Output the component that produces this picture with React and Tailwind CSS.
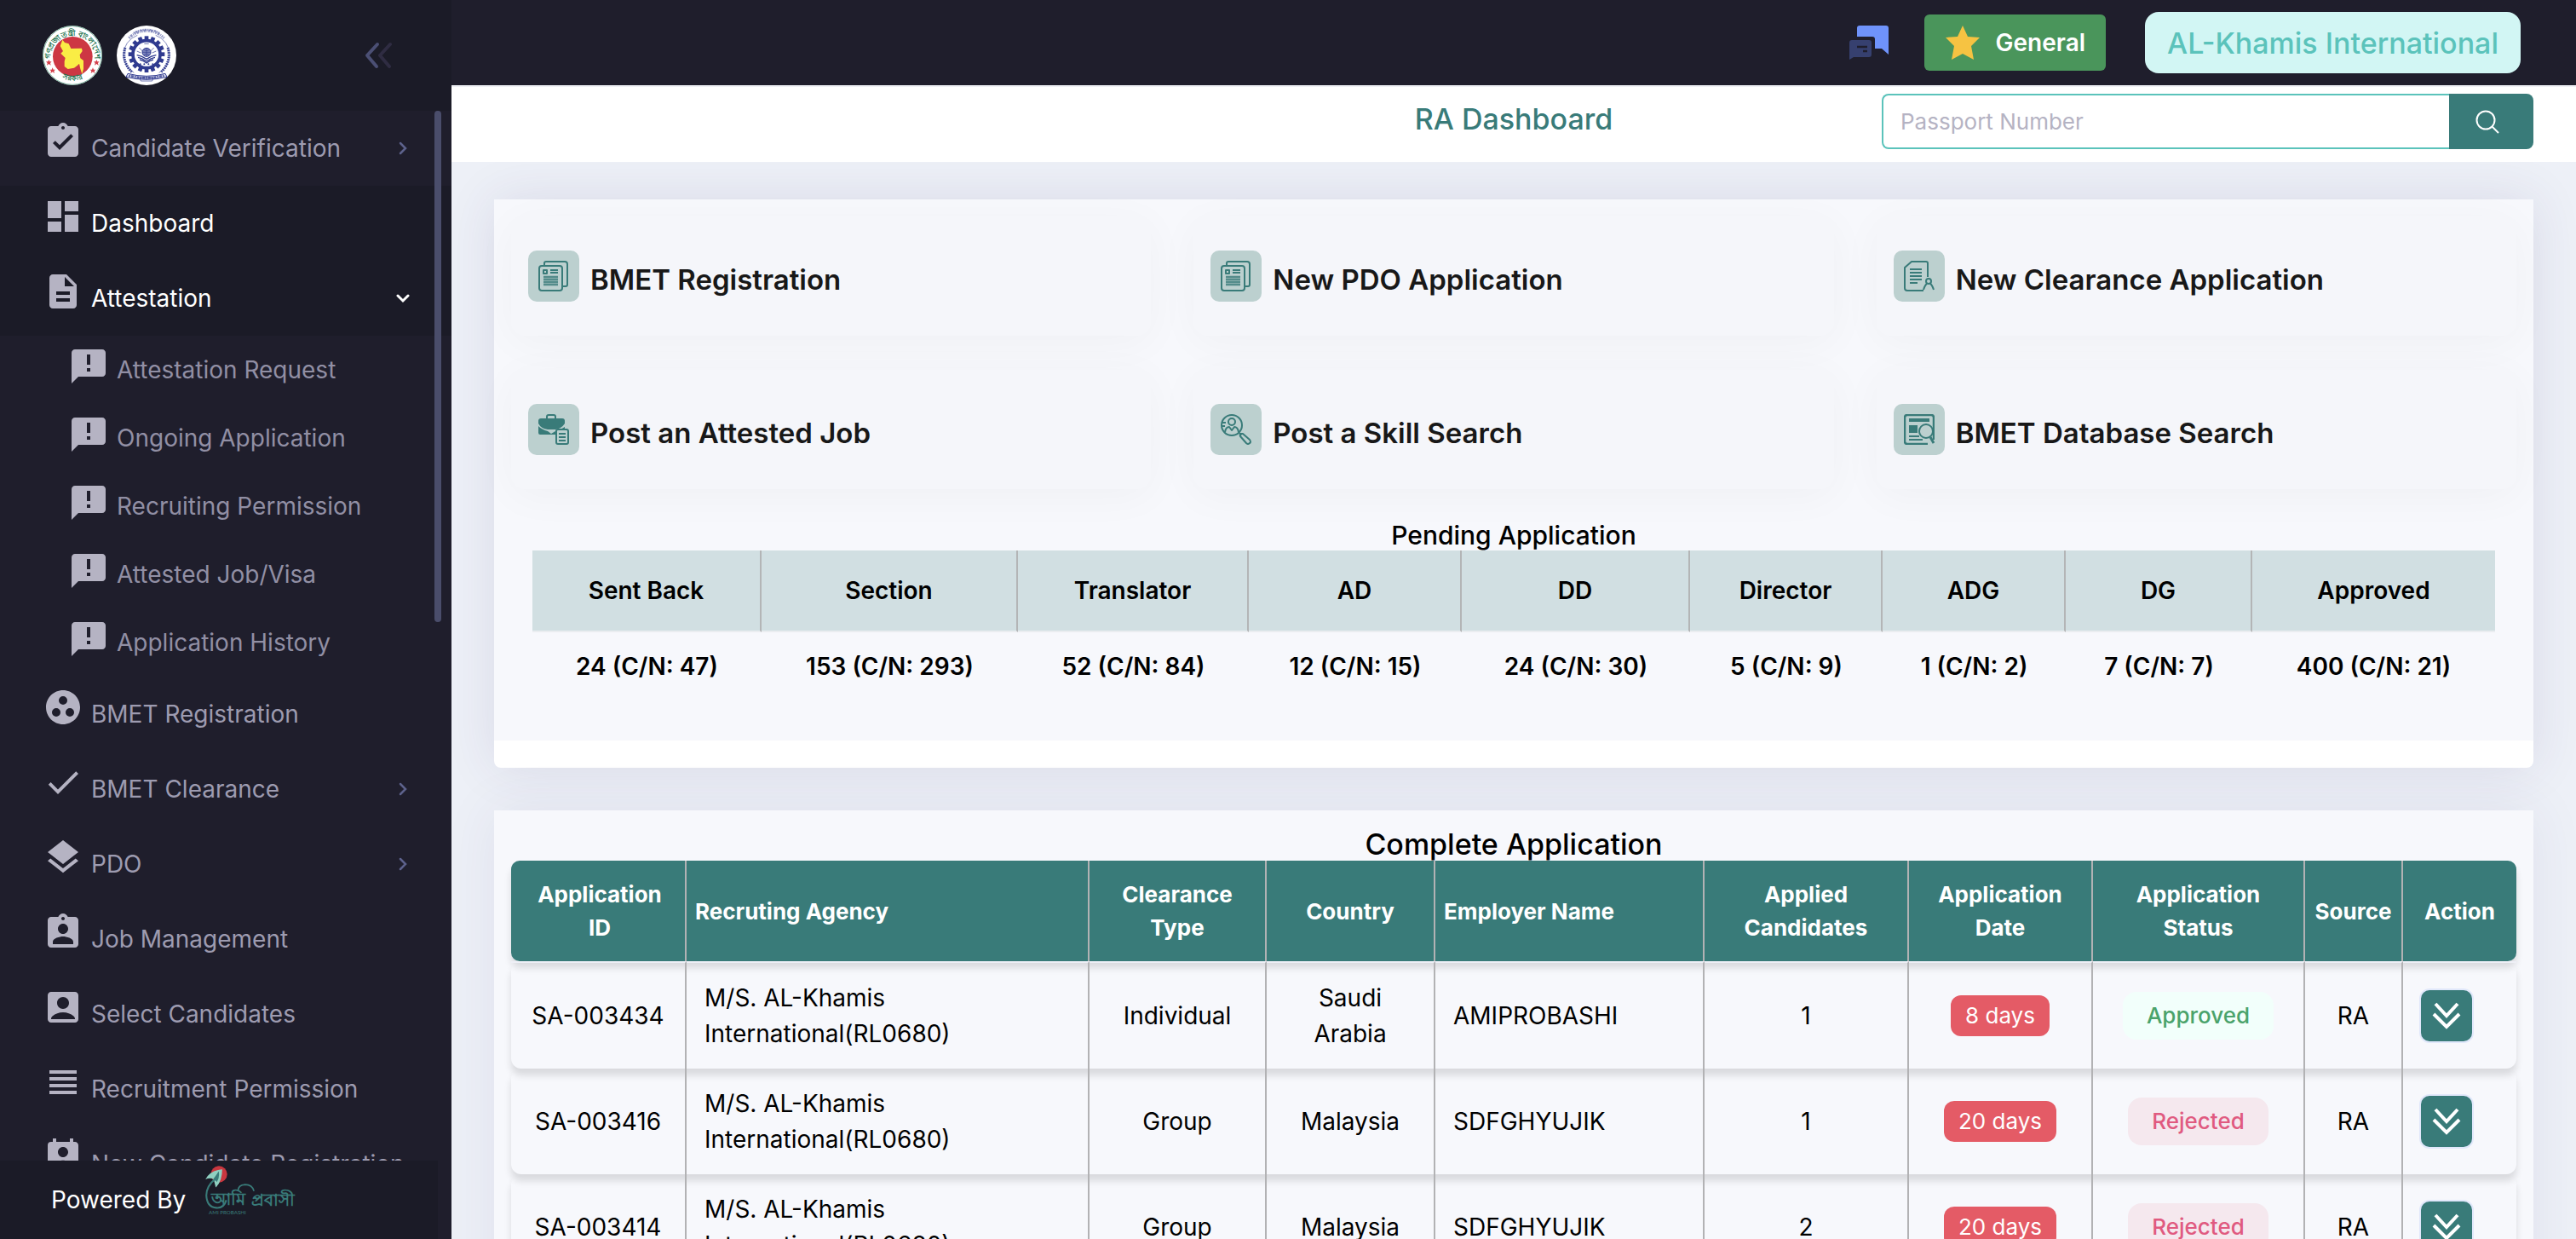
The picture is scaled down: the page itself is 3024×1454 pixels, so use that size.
import {
  MdAccountBox,
  MdAnnouncement,
  MdAssignmentInd,
  MdAssignmentTurnedIn,
  MdDashboard,
  MdDescription,
  MdDone,
  MdGroupWork,
  MdLayers,
  MdPermContactCalendar,
  MdViewHeadline,
} from "react-icons/md";

const TEAL = "#397b79";

const menu = [
  { label: "Candidate Verification", icon: MdAssignmentTurnedIn, arrow: "right" },
  { label: "Dashboard", icon: MdDashboard, active: true },
  {
    label: "Attestation",
    icon: MdDescription,
    active: true,
    arrow: "down",
    children: [
      "Attestation Request",
      "Ongoing Application",
      "Recruiting Permission",
      "Attested Job/Visa",
      "Application History",
    ],
  },
  { label: "BMET Registration", icon: MdGroupWork },
  { label: "BMET Clearance", icon: MdDone, arrow: "right" },
  { label: "PDO", icon: MdLayers, arrow: "right" },
  { label: "Job Management", icon: MdAssignmentInd },
  { label: "Select Candidates", icon: MdAccountBox },
  { label: "Recruitment Permission", icon: MdViewHeadline },
  { label: "New Candidate Registration", icon: MdPermContactCalendar },
];

function GovernmentSeal() {
  return (
    <svg viewBox="18 18 210 210" className="size-[70px]" role="img" aria-label="Government of Bangladesh">
      <circle cx="123" cy="123" r="105" fill="#fff" />
      <circle cx="123" cy="123" r="103" fill="none" stroke="#3d8f6f" strokeWidth="2" />
      <circle cx="124" cy="127" r="70" fill="#cd3743" />
      <path
        d="M88 68l8 10 14 4 8 17 38-1 2 10-9 13 2 12 11 8v30l-5 17-6-18-4-18-6 6-12 9-22 4-12-9 0-18 3-12-16-16 8-8-10-18z"
        fill="#faed45"
      />
      <defs>
        <path id="seal-top" d="M46 132a78 78 0 0 1 156 0" />
        <path id="seal-bottom" d="M60 186a94 94 0 0 0 128 0" />
      </defs>
      <g fill="#1f7551" fontFamily="Noto Sans, sans-serif" fontWeight="700">
        <text fontSize="27" textAnchor="middle">
          <textPath href="#seal-top" startOffset="50%">গণপ্রজাতন্ত্রী বাংলাদেশ</textPath>
        </text>
        <text fontSize="26" textAnchor="middle">
          <textPath href="#seal-bottom" startOffset="50%">সরকার</textPath>
        </text>
      </g>
      {[[40, 148], [53, 176], [208, 148], [195, 176]].map(([x, y]) => (
        <path key={`${x}-${y}`} transform={`translate(${x} ${y})`} d="M0-10l3 7h7l-5 5 2 8-7-5-7 5 2-8-5-5h7z" fill="#d3404b" />
      ))}
    </svg>
  );
}

function BureauSeal() {
  const teeth = Array.from({ length: 16 }, (_, i) => i * 22.5);
  return (
    <svg viewBox="279 18 210 210" className="size-[70px]" role="img" aria-label="Bureau of Manpower">
      <circle cx="384" cy="123" r="105" fill="#fff" />
      <g fill="#2f3a8f">
        {teeth.map((a) => (
          <rect key={a} x="377" y="55" width="14" height="18" transform={`rotate(${a} 384 119)`} />
        ))}
      </g>
      <circle cx="384" cy="119" r="48" fill="#fff" stroke="#2f3a8f" strokeWidth="11" />
      <g fill="none" stroke="#2f3a8f">
        <path d="M352 52a76 76 0 0 0-50 70q2 40 38 62M416 52a76 76 0 0 1 50 70q-2 40-38 62" strokeWidth="3" opacity=".6" />
        <path d="M309 96a82 82 0 0 0 24 86M459 96a82 82 0 0 1-24 86" strokeWidth="9" strokeDasharray="5 3" />
        <path d="M322 62a88 88 0 0 1 124 0" strokeWidth="9" strokeDasharray="5 3 8 3 3 3" opacity=".55" />
        <path d="M338 44a94 94 0 0 1 92 0" strokeWidth="6" strokeDasharray="4 3 7 3" opacity=".55" />
        <circle cx="384" cy="112" r="15" strokeWidth="3" fill="#8088bd" />
        <path d="M369 112h30M384 97v30M373 103q11 7 22 0M373 121q11-7 22 0" strokeWidth="2" />
        <path d="M350 122q16 2 34 14 18-12 34-14M354 130q14 2 30 14 16-12 30-14M360 138q12 2 24 12 12-10 24-12" strokeWidth="4" />
        <path d="M358 96l12 12M410 96l-12 12M350 108l14 6M418 108l-14 6M376 82h16" strokeWidth="3" opacity=".7" />
        <path d="M318 187q66 18 132 0l6 12q-72 18-144 0z" strokeWidth="3" fill="#dfe1f0" />
        <path d="M322 194q62 16 124 0" strokeWidth="8" strokeDasharray="5 3 9 3" opacity=".8" />
        <path d="M360 202h48l-4 11h-40z" strokeWidth="3" opacity=".7" />
      </g>
      <g fill="#2f3a8f">
        {[362, 376, 391, 406].map((x) => (
          <circle key={x} cx={x} cy="154" r="3" />
        ))}
      </g>
    </svg>
  );
}

function AmiProbashiLogo() {
  return (
    <svg viewBox="704 1325 312 168" className="h-[58px] w-[108px] overflow-visible" role="img" aria-label="Ami Probashi">
      <circle cx="753" cy="1354" r="28" fill="#c9373f" />
      <path d="M764 1337q-42 4-57 34 16-6 28 0l7 28q22-22 22-62z" fill="#8fd0c1" />
      <path d="M752 1344q4 22-6 36l-12-10q10-14 18-26z" fill={TEAL} />
      <path d="M742 1368q-32 26-32 58 2 40 34 42 26 2 34-26" fill="none" stroke={TEAL} strokeWidth="6" />
      <path d="M818 1410q0-20 24-21 24 0 30 22" fill="none" stroke={TEAL} strokeWidth="5" />
      <g fill={TEAL} fontFamily="Noto Sans, sans-serif" fontWeight="600">
        <text x="728" y="1458" fontSize="58">আমি</text>
        <text x="864" y="1462" fontSize="58">প্রবাসী</text>
        <text x="718" y="1491" fontSize="18" fontFamily="Lato, sans-serif" fontWeight="400">AMI PROBASHI</text>
      </g>
    </svg>
  );
}

function Arrow({ direction }) {
  return direction === "down" ? (
    <svg viewBox="0 0 16 16" className="mr-[49px] size-4" fill="none" stroke="#fff" strokeWidth="3" strokeLinecap="round">
      <path d="M2 5l6 6 6-6" />
    </svg>
  ) : (
    <svg viewBox="0 0 16 16" className="mr-[49px] size-4" fill="none" stroke="#5d628c" strokeWidth="2.5" strokeLinecap="round">
      <path d="M5 2l6 6-6 6" />
    </svg>
  );
}

function Sidebar() {
  return (
    <aside className="relative flex w-[530px] shrink-0 flex-col bg-[#1f1e2c]">
      <div className="flex h-[130px] shrink-0 items-center bg-[#1b1b27] pl-[50px] pr-[70px]">
        <div className="flex gap-[17px]">
          <GovernmentSeal />
          <BureauSeal />
        </div>
        <button type="button" aria-label="Collapse menu" className="ml-auto">
          <svg viewBox="0 0 32 32" className="size-8" fill="none" strokeWidth="4" strokeLinecap="round" strokeLinejoin="round">
            <path d="M30 3L18 16l11 13" stroke="#2f2c42" />
            <path d="M15 3L3 16l11 13" stroke="#4b4f74" />
          </svg>
        </button>
      </div>
      <nav className="min-h-0 flex-1 overflow-hidden">
        <ul>
          {menu.map(({ label, icon: Icon, active, arrow, children }) => (
            <li key={label}>
              <a
                href="#"
                className={
                  "flex h-[88px] items-center gap-[9px] pl-[50px] text-[28px] " +
                  (active ? "bg-[#1b1b27] text-white" : "text-[#9d9bb0]")
                }
              >
                <Icon className="mt-3 size-12 self-start text-[#b5b3c3]" />
                <span className="flex-1 whitespace-nowrap">{label}</span>
                {arrow && <Arrow direction={arrow} />}
              </a>
              {children && (
                <ul>
                  {children.map((child) => (
                    <li key={child}>
                      <a href="#" className="flex h-20 items-center gap-[9px] pl-20 text-[28px] text-[#918fa4]">
                        <MdAnnouncement className="mt-3 size-12 self-start text-[#b5b3c3]" />
                        {child}
                      </a>
                    </li>
                  ))}
                </ul>
              )}
            </li>
          ))}
        </ul>
      </nav>
      <div className="absolute right-3 top-[130px] h-[600px] w-2 rounded-full bg-[#4a4d6b]" />
      <footer className="mr-4 flex h-[92px] shrink-0 items-center gap-[22px] bg-[#1b1b27] pl-[60px] text-[28px] text-white">
        Powered By
        <div className="self-start pt-[6px]">
          <AmiProbashiLogo />
        </div>
      </footer>
    </aside>
  );
}

function TopBar() {
  return (
    <header className="flex h-[100px] shrink-0 items-center justify-end bg-[#1f1e2c] pr-[65px]">
      <button type="button" aria-label="Messages" className="mr-[42px]">
        <svg viewBox="0 0 46 40" className="h-10 w-[46px]">
          <path d="M12 0h31q3 0 3 3v31l-8-7h-8V16q0-3-3-3H9V3q0-3 3-3z" fill="#6f93fb" />
          <path d="M3 17h20q3 0 3 3v14q0 3-3 3H5l-5 3V20q0-3 3-3z" fill="#36406f" />
          <path d="M9 25h12M16 30h5" stroke="#1f1e2c" strokeWidth="2.5" />
        </svg>
      </button>
      <button
        type="button"
        className="mr-[46px] flex h-[66px] items-center gap-[18px] rounded-md bg-[#4a955b] px-6 text-[28px] font-semibold text-white"
      >
        <svg viewBox="0 0 42 40" className="h-10 w-[42px]">
          <path d="M21 0l6 13 14 1-10 10 3 16-13-7-13 7 3-16L1 14l14-1z" fill="#f6c342" />
        </svg>
        General
      </button>
      <button
        type="button"
        className="h-[72px] rounded-2xl bg-[#d2f6f4] px-[26px] text-[34px] font-medium text-[#5bc3bb]"
      >
        AL-Khamis International
      </button>
    </header>
  );
}

function TitleBar() {
  return (
    <div className="grid h-[90px] shrink-0 grid-cols-[1fr_auto_1fr] items-start border-t-2 border-[#eff0f5] bg-white px-[50px] pt-2">
      <h1 className="col-start-2 text-[34px] font-medium leading-[60px] text-[#397b79]">RA Dashboard</h1>
      <form className="ml-auto flex h-[65px] w-[765px]">
        <input
          type="text"
          aria-label="Passport Number"
          placeholder="Passport Number"
          className="min-w-0 flex-1 rounded-l-lg border-2 border-r-0 border-[#5bc3bb] px-5 text-[26px] placeholder:text-[#b5b3c3] focus:outline-none"
        />
        <button type="button" aria-label="Search" className="flex w-[99px] items-center justify-center rounded-r-lg bg-[#397b79] pr-[9px]">
          <svg viewBox="0 0 28 28" className="size-7" fill="none" stroke="#fff" strokeWidth="2">
            <circle cx="12" cy="12" r="10.5" />
            <path d="M19.500 19.500L27 27" />
          </svg>
        </button>
      </form>
    </div>
  );
}

const copiesIcon = (
  <>
    <path d="M7 5V3q0-2 2-2h22q3 0 3 3v24q0 2-2 2h-4" />
    <rect x="1" y="6" width="27" height="29" rx="3" />
    <path d="M6 11h4v4H6zM14 11h9M14 14h9" />
    <path d="M6 19h17M6 22h17M6 25h17M6 28h17" strokeWidth="2.5" opacity=".8" />
  </>
);

const shortcuts = [
  { label: "BMET Registration", art: copiesIcon },
  { label: "New PDO Application", art: copiesIcon },
  {
    label: "New Clearance Application",
    art: (
      <>
        <path d="M23 35H4q-3 0-3-3V8l8-7h17q2 0 2 2v16" />
        <path d="M7 10h14M7 14h14M7 18h14M7 22h14M7 26h9" />
        <circle cx="29" cy="24" r="3" />
        <path d="M23 34q2-6 4-7M35 34q-2-6-4-7" />
      </>
    ),
  },
  {
    label: "Post an Attested Job",
    art: (
      <>
        <path d="M10 5V3q0-2 2-2h6q2 0 2 2v2" />
        <path d="M3 5h25q3 0 3 3v3q-4 6-11 7h-9Q3 17 0 11V8q0-3 3-3z" fill={TEAL} stroke="none" />
        <path d="M0 14q4 4 11 6l4 3 5-3q7-2 11-5v9H2q-2 0-2-2z" fill={TEAL} stroke="none" />
        <rect x="21" y="18" width="14" height="17" rx="2" fill="#bcd0cf" />
        <path d="M24 23h8M24 27h8M24 31h8" />
      </>
    ),
  },
  {
    label: "Post a Skill Search",
    art: (
      <>
        <circle cx="13" cy="13" r="12" />
        <circle cx="13" cy="9" r="4" />
        <path d="M5 21q1-6 5-6l3 4 3-4q4 0 5 6M2 10h4M2 14h3" />
        <path d="M22 22l2 3M26 23l8 7q2 3 0 4-2 2-4 0l-7-8q-1-2 1-3z" />
      </>
    ),
  },
  {
    label: "BMET Database Search",
    art: (
      <>
        <path d="M28 35H4q-3 0-3-3V4q0-3 3-3h28q3 0 3 3v26" strokeWidth="2.5" />
        <path d="M6 7h24" strokeWidth="4" />
        <path d="M6 13h10v9H6z" fill={TEAL} stroke="none" />
        <path d="M6 26h12M6 30h16" strokeWidth="2" />
        <circle cx="26" cy="20" r="8" fill="#bcd0cf" />
        <path d="M31 27l4 7" strokeWidth="3" />
      </>
    ),
  },
];

function Shortcut({ label, art }) {
  return (
    <a
      href="#"
      className="flex h-[140px] gap-[13px] rounded-2xl bg-[#f5f6fa] pl-5 pt-10 text-[33px] font-semibold text-[#181818] shadow-[0_8px_50px_rgba(0,0,0,0.035)]"
    >
      <span className="size-[60px] rounded-[10px] bg-[#bcd0cf] p-3">
        <svg viewBox="0 0 36 36" className="size-9" fill="none" stroke={TEAL} strokeWidth="2" strokeLinejoin="round">
          {art}
        </svg>
      </span>
      <span className="pt-[10px] leading-[48px]">{label}</span>
    </a>
  );
}

const pending = [
  ["Sent Back", "24 (C/N: 47)", "w-[269px]"],
  ["Section", "153 (C/N: 293)", "w-[301px]"],
  ["Translator", "52 (C/N: 84)", "w-[271px]"],
  ["AD", "12 (C/N: 15)", "w-[250px]"],
  ["DD", "24 (C/N: 30)", "w-[268px]"],
  ["Director", "5 (C/N: 9)", "w-[226px]"],
  ["ADG", "1 (C/N: 2)", "w-[215px]"],
  ["DG", "7 (C/N: 7)", "w-[219px]"],
  ["Approved", "400 (C/N: 21)", "w-[285px]"],
];

function PendingTable() {
  return (
    <table className="w-full table-fixed border-separate border-spacing-0 text-[28px] font-semibold text-black">
      <caption className="text-[30px] font-medium leading-[36px]">Pending Application</caption>
      <thead>
        <tr className="h-24">
          {pending.map(([name, , width]) => (
            <th
              key={name}
              scope="col"
              className={width + " border-b-2 border-r-2 border-b-[#eaedf0] border-r-[#b3b5b6] bg-[#d1dfe2] font-semibold last:border-r-0"}
            >
              {name}
            </th>
          ))}
        </tr>
      </thead>
      <tbody>
        <tr className="h-20">
          {pending.map(([name, count]) => (
            <td key={name} className="text-center">
              {count}
            </td>
          ))}
        </tr>
      </tbody>
    </table>
  );
}

const columns = [
  ["Application ID", "w-[206px] pl-6 pr-5 text-center"],
  ["Recruting Agency", "w-[473px] pl-[10px] text-left"],
  ["Clearance Type", "w-[208px] px-4 text-center"],
  ["Country", "w-[198px] text-center"],
  ["Employer Name", "w-[316px] pl-[10px] text-left"],
  ["Applied Candidates", "w-[240px] px-4 text-center"],
  ["Application Date", "w-[216px] px-4 text-center"],
  ["Application Status", "w-[249px] px-8 text-center"],
  ["Source", "w-[115px] text-center"],
  ["Action", "w-[133px] text-center"],
];

const applications = [
  { id: "SA-003434", type: "Individual", country: "Saudi Arabia", employer: "AMIPROBASHI", count: 1, age: "8 days", status: "Approved" },
  { id: "SA-003416", type: "Group", country: "Malaysia", employer: "SDFGHYUJIK", count: 1, age: "20 days", status: "Rejected" },
  { id: "SA-003414", type: "Group", country: "Malaysia", employer: "SDFGHYUJIK", count: 2, age: "20 days", status: "Rejected" },
];

const cell = "border-r-2 border-r-[#b2b2b4] text-center";

function ApplicationsTable() {
  return (
    <table className="w-full table-fixed border-separate border-spacing-0 text-[28px] text-black">
      <caption className="text-[34px] font-medium leading-[39px]">Complete Application</caption>
      <thead>
        <tr className="h-[118px] rounded-[10px] shadow-[0_8px_8px_rgba(0,0,0,0.12)]">
          {columns.map(([name, style]) => (
            <th
              key={name}
              scope="col"
              className={
                style +
                " border-r-2 border-[#b2b2b4] bg-[#397b79] text-[26px] font-bold leading-[39px] text-white first:rounded-l-[10px] last:rounded-r-[10px] last:border-r-0"
              }
            >
              {name}
            </th>
          ))}
        </tr>
      </thead>
      <tbody>
        {applications.map((row) => (
          <tr
            key={row.id}
            className="h-[124px] rounded-xl leading-[42px] shadow-[0_8px_8px_rgba(0,0,0,0.12)] first:h-[126px] first:*:border-t-2 first:*:border-t-[#eeeff6]"
          >
            <td className={cell}>{row.id}</td>
            <td className="border-r-2 border-r-[#b2b2b4] pl-[21px] pr-28">M/S. AL-Khamis International(RL0680)</td>
            <td className={cell}>{row.type}</td>
            <td className={cell + " px-6"}>{row.country}</td>
            <td className="border-r-2 border-r-[#b2b2b4] pl-[21px]">{row.employer}</td>
            <td className={cell}>{row.count}</td>
            <td className={cell}>
              <span className="inline-flex h-12 items-center rounded-xl bg-[#e45b66] px-[17px] text-[26px] text-white">
                {row.age}
              </span>
            </td>
            <td className={cell}>
              <span
                className={
                  "inline-flex h-14 items-center rounded-2xl px-[28px] text-[26px] font-medium " +
                  (row.status === "Approved" ? "bg-[#f2fffb] text-[#4aa36b]" : "bg-[#f5e8ee] text-[#e05a80]")
                }
              >
                {row.status}
              </span>
            </td>
            <td className={cell}>RA</td>
            <td className="pl-[19px]">
              <button
                type="button"
                aria-label={`Open ${row.id}`}
                className="flex size-16 items-center justify-center rounded-xl border-2 border-[#e1e8fb] bg-[#397b79]"
              >
                <svg viewBox="0 0 34 32" className="h-8 w-[34px]" fill="none" stroke="#fff" strokeWidth="4">
                  <path d="M4 2l13 14L30 2M2 14l15 15 15-15" />
                </svg>
              </button>
            </td>
          </tr>
        ))}
      </tbody>
    </table>
  );
}

export default function App() {
  return (
    <div className="flex h-screen overflow-hidden bg-[#edf0f7] font-['Inter',sans-serif]">
      <Sidebar />
      <div className="flex min-w-0 flex-1 flex-col">
        <TopBar />
        <TitleBar />
        <main className="flex min-h-0 flex-1 flex-col gap-[50px] overflow-hidden px-[50px] pt-11">
          <section className="shrink-0 rounded-b-lg bg-white pb-8 shadow-[0_0_60px_rgba(60,50,110,0.11)]">
            <div className="bg-[#f7f8fc] pb-[47px] pt-5">
              <div className="grid grid-cols-3 gap-x-[50px] gap-y-10 px-5">
                {shortcuts.map((s) => (
                  <Shortcut key={s.label} {...s} />
                ))}
              </div>
              <div className="mt-9 px-[45px]">
                <PendingTable />
              </div>
            </div>
          </section>
          <section className="shrink-0 bg-[#f7f8fc] p-5 shadow-[0_0_60px_rgba(60,50,110,0.08)]">
            <ApplicationsTable />
          </section>
        </main>
      </div>
    </div>
  );
}
